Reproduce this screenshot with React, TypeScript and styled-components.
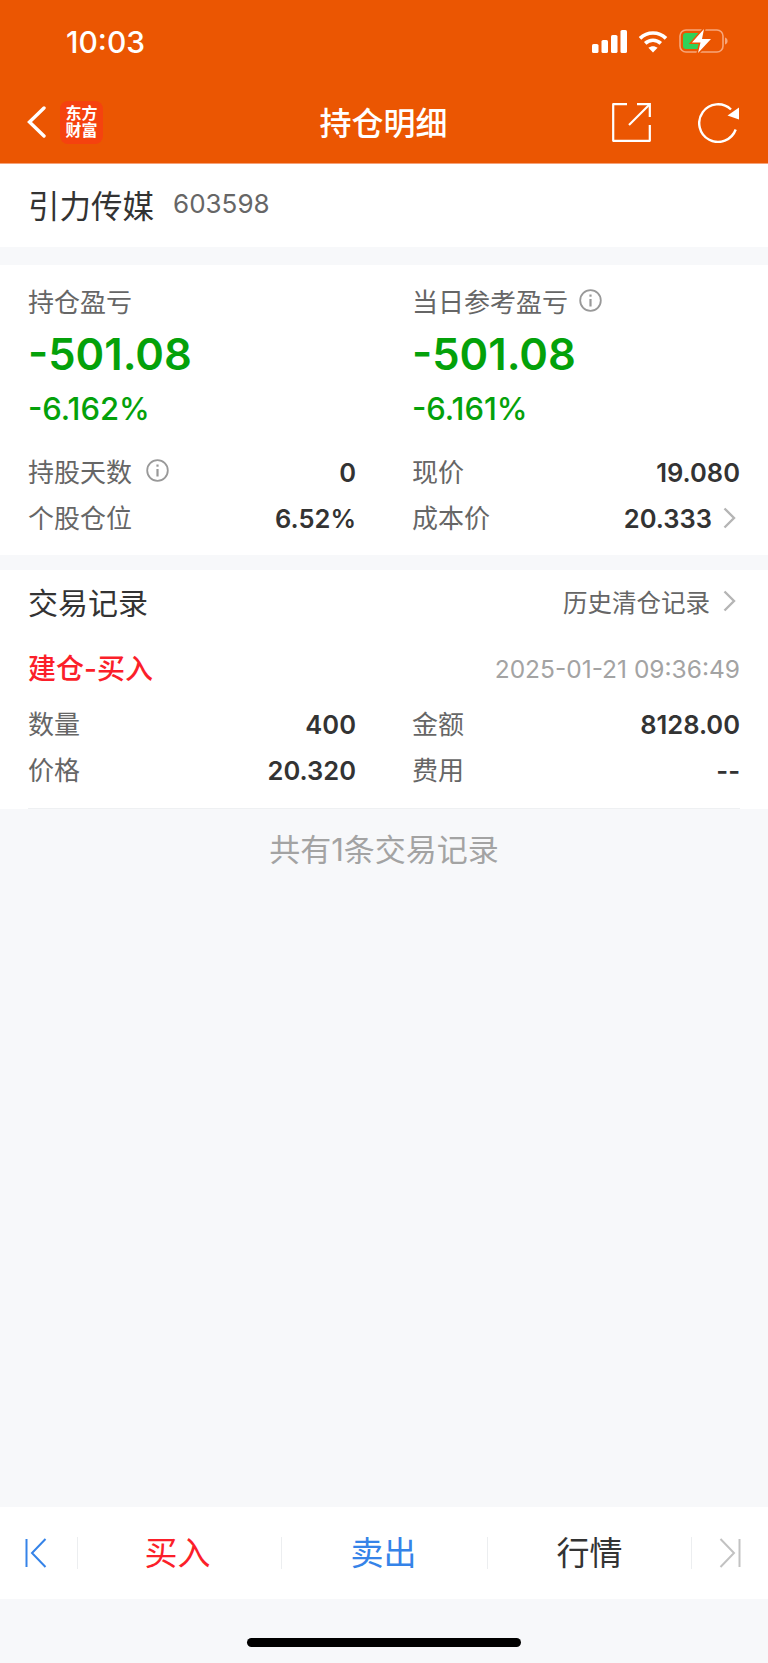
import styled, { createGlobalStyle } from 'styled-components';

const GlobalStyle = createGlobalStyle`
  html, body {
    margin: 0;
    padding: 0;
    background: #f7f8fa;
  }
  * {
    box-sizing: border-box;
  }
`;

const Page = styled.div`
  display: flex;
  flex-direction: column;
  height: 100vh;
  font-family: Inter, 'Noto Sans CJK SC', sans-serif;
  color: #333;
  background: #f7f8fa;
`;

const TopArea = styled.header`
  height: 164px;
  flex-shrink: 0;
  background: #eb5602;
  border-bottom: 1px solid #f6a278;
  color: #fff;
`;

const StatusBar = styled.div`
  display: flex;
  align-items: center;
  justify-content: space-between;
  height: 84px;
  padding: 0 40px 2px 66px;
`;

const Time = styled.span`
  margin-top: 2px;
  font-size: 30px;
  font-weight: 500;
`;

const StatusIcons = styled.div`
  display: flex;
  align-items: center;
  gap: 11px;
`;

const NavBar = styled.nav`
  display: grid;
  grid-template-columns: 1fr auto 1fr;
  align-items: center;
  height: 76px;
  padding: 0 28px 0 27px;
`;

const NavLeft = styled.div`
  display: flex;
  align-items: center;
  gap: 14px;
`;

const NavRight = styled.div`
  display: flex;
  align-items: center;
  justify-content: flex-end;
  gap: 47px;
`;

const Title = styled.h1`
  margin: 0;
  padding-bottom: 3px;
  font-size: 32px;
  font-weight: 500;
`;

const Logo = styled.div`
  display: flex;
  flex-direction: column;
  align-items: center;
  justify-content: center;
  width: 43px;
  height: 43px;
  border-radius: 8px;
  background: #f5420f;
  color: #fff;
  font-size: 16px;
  font-weight: 700;
  line-height: 17px;
`;

const StockBar = styled.section`
  display: flex;
  align-items: center;
  gap: 19px;
  height: 83px;
  padding: 0 28px 4px;
  background: #fff;
`;

const StockName = styled.span`
  font-size: 31.5px;
  color: #333;
`;

const StockCode = styled.span`
  font-size: 26px;
  color: #666;
`;

const Card = styled.section<{ $top: number }>`
  margin-top: ${(p) => p.$top}px;
  padding: 0 28px;
  background: #fff;
`;

const Columns = styled.div`
  display: grid;
  grid-template-columns: 328px 328px;
  column-gap: 56px;
`;

const Label = styled.span<{ $gap?: number }>`
  display: flex;
  align-items: center;
  gap: ${(p) => p.$gap ?? 11}px;
  padding-bottom: 4px;
  font-size: 26px;
  color: #666;
`;

const PnlBlock = styled.div`
  display: flex;
  flex-direction: column;
  height: 184px;
  padding-top: 17px;
`;

const PnlLabel = styled(Label)`
  height: 40px;
`;

const PnlValue = styled.span`
  height: 64px;
  font-size: 43.5px;
  line-height: 64px;
  font-weight: 600;
  color: #04a10a;
`;

const PnlPercent = styled.span`
  height: 46px;
  font-size: 31px;
  font-weight: 500;
  line-height: 46px;
  color: #04a10a;
`;

const Row = styled.div`
  display: flex;
  align-items: center;
  justify-content: space-between;
  height: 46px;
`;

const Value = styled.span`
  display: flex;
  align-items: center;
  gap: 11px;
  font-size: 25.5px;
  font-weight: 600;
  color: #333;
`;

const StatsRows = styled.div`
  padding-bottom: 14px;
`;

const TradeHeader = styled.div`
  display: flex;
  align-items: center;
  justify-content: space-between;
  height: 66px;
`;

const SectionTitle = styled.span`
  padding-bottom: 4px;
  font-size: 30px;
  color: #333;
`;

const HistoryLink = styled.span`
  display: flex;
  align-items: center;
  gap: 13px;
  padding-bottom: 4px;
  font-size: 24.5px;
  color: #666;
`;

const ChevronSlot = styled.span`
  display: flex;
  margin-right: 4px;
`;

const TradeTop = styled.div`
  display: flex;
  align-items: center;
  justify-content: space-between;
  height: 65px;
`;

const TradeType = styled.span`
  padding-bottom: 4px;
  font-size: 28px;
  font-weight: 500;
  color: #fb1f2a;
`;

const TradeTime = styled.span`
  font-size: 24.5px;
  color: #a3a3a3;
`;

const TradeRows = styled.div`
  height: 108px;
  border-bottom: 1px solid #eef0f2;
`;

const TotalNote = styled.div`
  padding-top: 20px;
  font-size: 31px;
  line-height: 42px;
  text-align: center;
  color: #a3a3a3;
`;

const Spacer = styled.div`
  flex: 1;
`;

const ActionBar = styled.div`
  display: grid;
  grid-template-columns: 77px 204px 206px 204px 77px;
  align-items: center;
  height: 92px;
  flex-shrink: 0;
  background: #fff;
`;

const ActionCell = styled.div<{ $color?: string; $divider?: boolean; $shift?: number }>`
  display: flex;
  align-items: center;
  justify-content: center;
  height: 32px;
  padding-right: ${(p) => p.$shift ?? 0}px;
  font-size: 33px;
  color: ${(p) => p.$color || '#333'};
  border-left: ${(p) => (p.$divider ? '1px solid #eceef0' : 'none')};
`;

const ActionText = styled.span`
  margin-top: -4px;
`;

const HomeArea = styled.div`
  display: flex;
  justify-content: center;
  height: 64px;
  flex-shrink: 0;
  padding-top: 39px;
`;

const HomeIndicator = styled.div`
  width: 274px;
  height: 9px;
  border-radius: 5px;
  background: #000;
`;

const InfoIcon = () => (
  <svg width="23" height="23" viewBox="0 0 23 23" fill="none" stroke="#999" strokeWidth="1.8">
    <circle cx="11.5" cy="11.5" r="10.300" />
    <path d="M11.500 10v7.500" strokeWidth="2.200" />
    <path d="M11.500 5.500v2.200" strokeWidth="2.200" />
  </svg>
);

const Chevron = () => (
  <svg width="13" height="22" viewBox="0 0 13 22" fill="none" stroke="#b5b5b5" strokeWidth="2.400">
    <path d="M1.500 1.500 11 11l-9.500 9.500" />
  </svg>
);

const SignalIcon = () => (
  <svg width="35" height="23" viewBox="0 0 35 23" fill="#fff">
    <rect x="0" y="14" width="6.500" height="9" rx="1.600" />
    <rect x="9.500" y="10" width="6.500" height="13" rx="1.600" />
    <rect x="19" y="5" width="6.500" height="18" rx="1.600" />
    <rect x="28.500" y="0" width="6.500" height="23" rx="1.600" />
  </svg>
);

const WifiIcon = () => (
  <svg width="30" height="23" viewBox="0 0 30 23" fill="none" stroke="#fff" strokeWidth="3.600">
    <path d="M2 8.400c7.400-7.200 18.600-7.200 26 0" />
    <path d="M7.200 13.400c4.500-4.200 11.100-4.200 15.600 0" />
    <path d="M15 22.600l-4.600-4.900c2.700-2.100 6.500-2.100 9.200 0z" fill="#fff" stroke="none" />
  </svg>
);

const BatteryIcon = () => (
  <svg width="49" height="24" viewBox="0 0 49 24" fill="none">
    <rect x="1" y="1" width="43" height="22" rx="6" stroke="#f7a67b" strokeWidth="1.600" />
    <rect x="4" y="4" width="19" height="16" rx="3" fill="#30d158" />
    <path d="M46 8.500c1.600.5 2.600 1.900 2.600 3.500s-1 3-2.600 3.500z" fill="#f7a67b" />
    <path d="M25 0 13 13.500h8.500L19 24l13-14h-9z" fill="#eb5602" stroke="#eb5602" strokeWidth="3" />
    <path d="M25 0 13 13.500h8.500L19 24l13-14h-9z" fill="#fff" />
  </svg>
);

const BackIcon = () => (
  <svg width="19" height="32" viewBox="0 0 19 32" fill="none" stroke="#fff" strokeWidth="3.400" strokeLinecap="round">
    <path d="M17 2 2.500 16 17 30" />
  </svg>
);

const ShareIcon = () => (
  <svg width="40" height="40" viewBox="0 0 40 40" fill="none" stroke="#fff" strokeWidth="2.200">
    <path d="M16 2.200H2.200V38.800H38.800V23" strokeLinejoin="round" />
    <path d="M18 23 38.500 2.500" />
    <path d="M26 2.200H38.800V15" />
  </svg>
);

const RefreshIcon = () => (
  <svg width="42" height="41" viewBox="0 0 42 41" fill="none">
    <path d="M37.700 27.500A18.800 18.800 0 1 1 33 7.500" stroke="#fff" strokeWidth="2.400" />
    <path d="M41 5.500V17.500L29.500 13.500z" fill="#fff" />
  </svg>
);

const FirstIcon = () => (
  <svg width="22" height="30" viewBox="0 0 22 30" fill="none" stroke="#3583e8" strokeWidth="2">
    <path d="M1.500 1v28" />
    <path d="M20.500 1 7 15l13.500 14" />
  </svg>
);

const LastIcon = () => (
  <svg width="22" height="30" viewBox="0 0 22 30" fill="none" stroke="#c2c2c2" strokeWidth="2">
    <path d="M20.500 1v28" />
    <path d="M1.500 1 15 15 1.500 29" />
  </svg>
);

export default function App() {
  return (
    <Page>
      <GlobalStyle />
      <TopArea>
        <StatusBar>
          <Time>10:03</Time>
          <StatusIcons>
            <SignalIcon />
            <WifiIcon />
            <BatteryIcon />
          </StatusIcons>
        </StatusBar>
        <NavBar>
          <NavLeft>
            <BackIcon />
            <Logo>
              <span>东方</span>
              <span>财富</span>
            </Logo>
          </NavLeft>
          <Title>持仓明细</Title>
          <NavRight>
            <ShareIcon />
            <RefreshIcon />
          </NavRight>
        </NavBar>
      </TopArea>

      <StockBar>
        <StockName>引力传媒</StockName>
        <StockCode>603598</StockCode>
      </StockBar>

      <Card $top={18}>
        <Columns>
          <PnlBlock>
            <PnlLabel>持仓盈亏</PnlLabel>
            <PnlValue>-501.08</PnlValue>
            <PnlPercent>-6.162%</PnlPercent>
          </PnlBlock>
          <PnlBlock>
            <PnlLabel>
              当日参考盈亏
              <InfoIcon />
            </PnlLabel>
            <PnlValue>-501.08</PnlValue>
            <PnlPercent>-6.161%</PnlPercent>
          </PnlBlock>
        </Columns>
        <StatsRows>
          <Columns>
            <Row>
              <Label $gap={14}>
                持股天数
                <InfoIcon />
              </Label>
              <Value>0</Value>
            </Row>
            <Row>
              <Label>现价</Label>
              <Value>19.080</Value>
            </Row>
            <Row>
              <Label>个股仓位</Label>
              <Value>6.52%</Value>
            </Row>
            <Row>
              <Label>成本价</Label>
              <Value>
                20.333
                <ChevronSlot>
                  <Chevron />
                </ChevronSlot>
              </Value>
            </Row>
          </Columns>
        </StatsRows>
      </Card>

      <Card $top={15}>
        <TradeHeader>
          <SectionTitle>交易记录</SectionTitle>
          <HistoryLink>
            历史清仓记录
            <ChevronSlot>
              <Chevron />
            </ChevronSlot>
          </HistoryLink>
        </TradeHeader>
        <TradeTop>
          <TradeType>建仓-买入</TradeType>
          <TradeTime>2025-01-21 09:36:49</TradeTime>
        </TradeTop>
        <TradeRows>
          <Columns>
            <Row>
              <Label>数量</Label>
              <Value>400</Value>
            </Row>
            <Row>
              <Label>金额</Label>
              <Value>8128.00</Value>
            </Row>
            <Row>
              <Label>价格</Label>
              <Value>20.320</Value>
            </Row>
            <Row>
              <Label>费用</Label>
              <Value>--</Value>
            </Row>
          </Columns>
        </TradeRows>
      </Card>

      <TotalNote>共有1条交易记录</TotalNote>
      <Spacer />

      <ActionBar>
        <ActionCell $shift={5}>
          <FirstIcon />
        </ActionCell>
        <ActionCell $divider $shift={4} $color="#fb1f2a">
          <ActionText>买入</ActionText>
        </ActionCell>
        <ActionCell $divider $shift={2} $color="#3583e8">
          <ActionText>卖出</ActionText>
        </ActionCell>
        <ActionCell $divider>
          <ActionText>行情</ActionText>
        </ActionCell>
        <ActionCell $divider>
          <LastIcon />
        </ActionCell>
      </ActionBar>
      <HomeArea>
        <HomeIndicator />
      </HomeArea>
    </Page>
  );
}
